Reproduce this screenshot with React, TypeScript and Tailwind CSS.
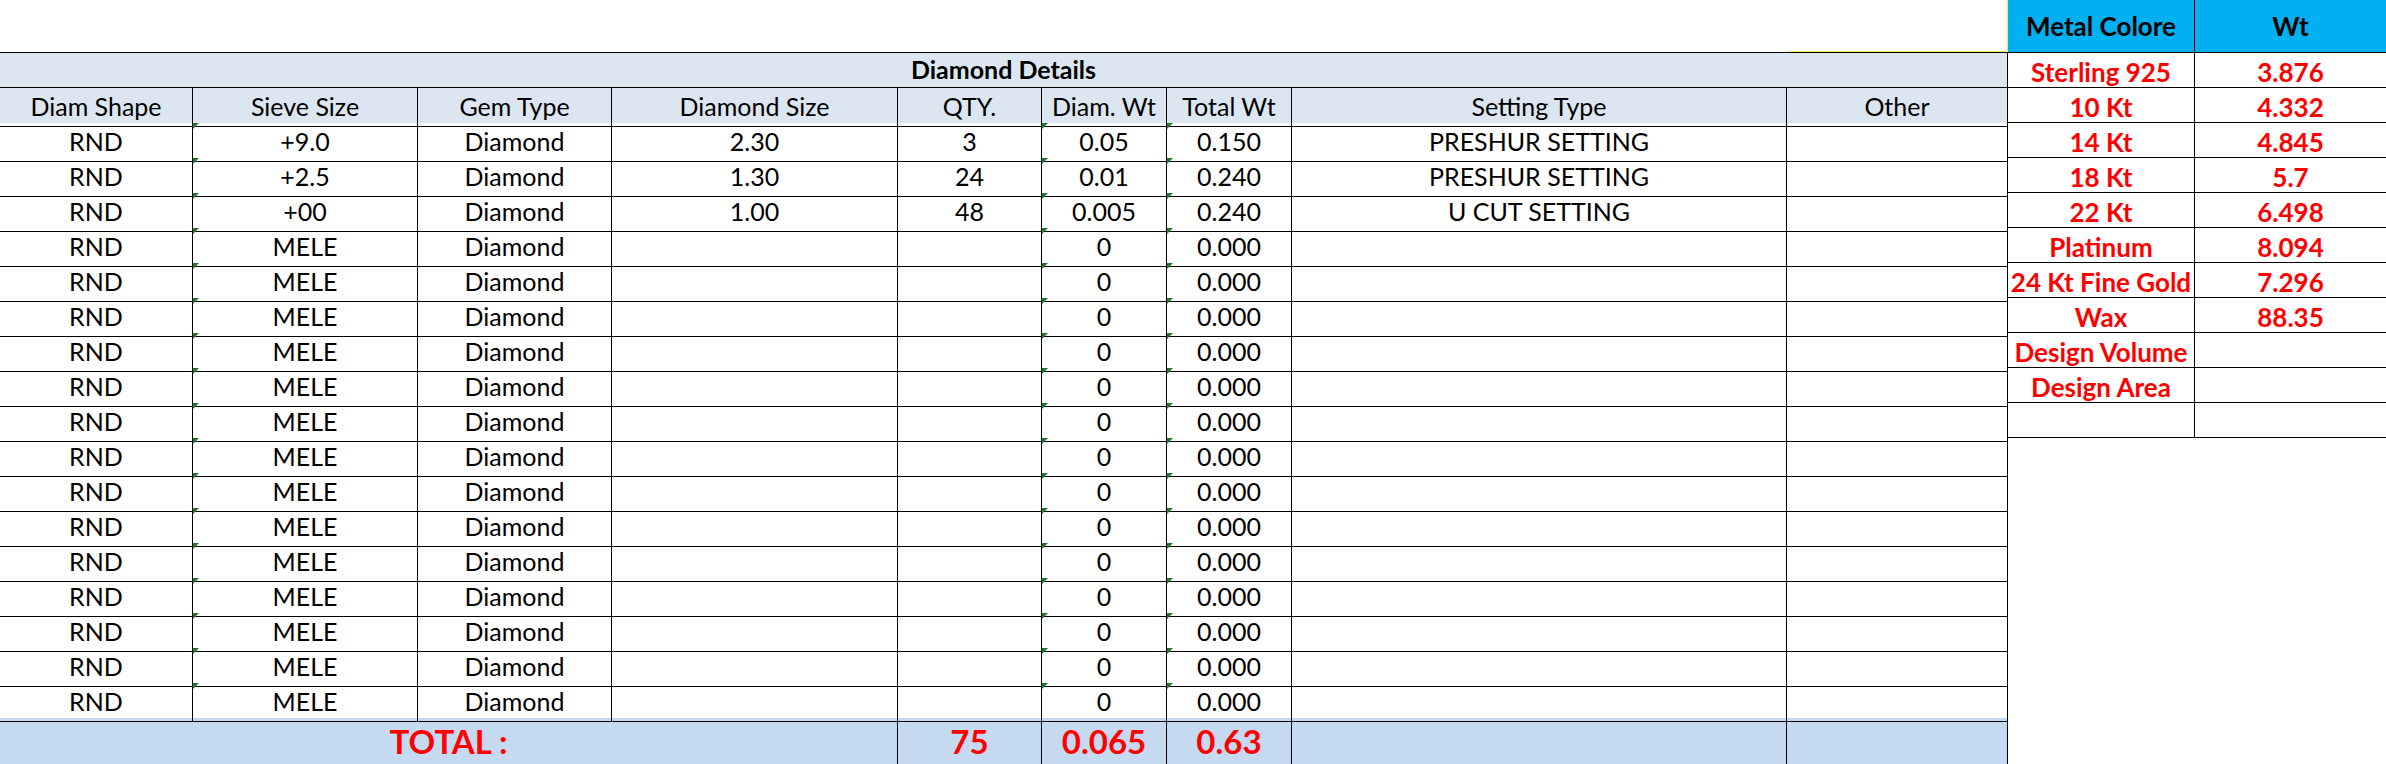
import React from 'react';

type Row = string[];

const mele: Row = ['RND', 'MELE', 'Diamond', '', '', '0', '0.000', '', ''];

const rows: Row[] = [
  ['RND', '+9.0', 'Diamond', '2.30', '3', '0.05', '0.150', 'PRESHUR SETTING', ''],
  ['RND', '+2.5', 'Diamond', '1.30', '24', '0.01', '0.240', 'PRESHUR SETTING', ''],
  ['RND', '+00', 'Diamond', '1.00', '48', '0.005', '0.240', 'U CUT SETTING', ''],
  ...Array.from({ length: 14 }, () => mele),
];

const headers = ['Diam Shape', 'Sieve Size', 'Gem Type', 'Diamond Size', 'QTY.', 'Diam. Wt', 'Total Wt', 'Setting Type', 'Other'];

const metals: [string, string][] = [
  ['Sterling 925', '3.876'],
  ['10 Kt', '4.332'],
  ['14 Kt', '4.845'],
  ['18 Kt', '5.7'],
  ['22 Kt', '6.498'],
  ['Platinum', '8.094'],
  ['24 Kt Fine Gold', '7.296'],
  ['Wax', '88.35'],
  ['Design Volume', ''],
  ['Design Area', ''],
  ['', ''],
];

// columns that show Excel's green "number stored as text" marker
const flagged = [1, 5, 6];

const gridCols = 'grid grid-cols-[193px_225px_194px_286px_144px_125px_125px_495px_221px]';

function Flag() {
  return (
    <span className="absolute left-0 top-0 h-0 w-0 border-t-[6px] border-r-[6px] border-t-[#217a2c] border-r-transparent" />
  );
}

export default function App() {
  return (
    <div className="flex h-[764px] w-[2386px] overflow-hidden bg-white font-[family-name:Lato,sans-serif] text-[25px] text-black">
      {/* diamond details sheet */}
      <div className="flex w-[2008px] flex-col">
        <div className="flex h-[52px]">
          <div className="flex-1" />
          <div className="w-[221px] border-r border-b border-[#f0ea5c]" />
        </div>

        <div className="flex h-[36px] items-center justify-center border-y border-r border-black bg-[#dce6f1] font-bold">
          Diamond Details
        </div>

        <div className={`${gridCols} h-[35px] bg-[#dce6f1]`}>
          {headers.map((h) => (
            <div key={h} className="flex items-center justify-center border-r border-b border-black">
              {h}
            </div>
          ))}
        </div>

        {rows.map((row, i) => (
          <div key={i} className={`${gridCols} h-[35px]`}>
            {row.map((cell, j) => (
              <div key={j} className="relative flex items-center justify-center border-r border-b border-black">
                {flagged.includes(j) && <Flag />}
                {cell}
              </div>
            ))}
          </div>
        ))}

        <div className={`${gridCols} h-[46px] bg-[#c5d9f1] text-[33px] leading-none font-bold text-[#ff0000]`}>
          <div className="col-span-4 flex items-center justify-center border-r border-black">TOTAL :</div>
          <div className="flex items-center justify-center border-r border-black">75</div>
          <div className="flex items-center justify-center border-r border-black">0.065</div>
          <div className="flex items-center justify-center border-r border-black">0.63</div>
          <div className="border-r border-black" />
          <div className="border-r border-black" />
        </div>
      </div>

      {/* metal weights */}
      <div className="flex w-[378px] flex-col font-bold">
        <div className="grid h-[53px] grid-cols-[187px_191px] border-b border-black bg-[#00b0f0] text-[26px]">
          <div className="flex items-center justify-center border-r border-black">Metal Colore</div>
          <div className="flex items-center justify-center">Wt</div>
        </div>
        {metals.map(([name, wt], i) => (
          <div key={i} className="grid h-[35px] grid-cols-[187px_191px] border-b border-black text-[26px] text-[#ff0000]">
            <div className="flex items-center justify-center border-r border-black">{name}</div>
            <div className="flex items-center justify-center">{wt}</div>
          </div>
        ))}
      </div>
    </div>
  );
}
